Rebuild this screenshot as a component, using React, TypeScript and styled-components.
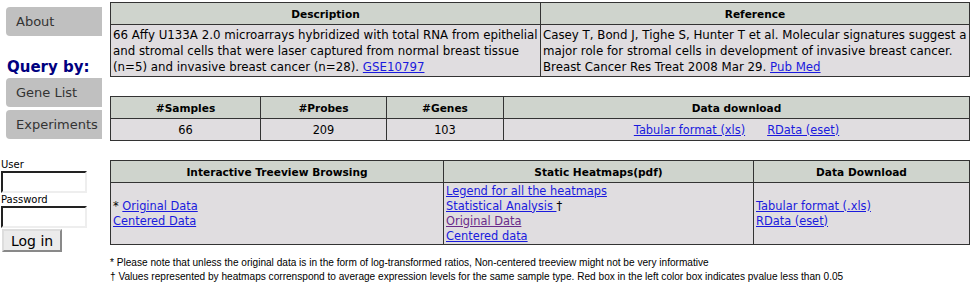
import * as React from 'react';
import styled, { createGlobalStyle } from 'styled-components';

const GlobalStyle = createGlobalStyle`
  html, body {
    margin: 0;
    padding: 0;
    background: #ffffff;
    font-family: "DejaVu Sans", Verdana, sans-serif;
  }
  a {
    color: #1a1add;
  }
`;

const Page = styled.div`
  display: flex;
  align-items: flex-start;
`;

const Sidebar = styled.div`
  width: 110px;
  flex: none;
  padding-top: 7px;
`;

const NavButton = styled.div`
  width: 86px;
  height: 29px;
  margin-left: 6px;
  margin-bottom: 3px;
  padding-left: 10px;
  display: flex;
  align-items: center;
  background: #c0c0c0;
  border-radius: 4px 0 0 4px;
  color: #333333;
  font-size: 13px;
`;

const QueryTitle = styled.div`
  margin: 22px 0 2px 7px;
  color: #000080;
  font-size: 15px;
  font-weight: bold;
  line-height: 18px;
`;

const LoginForm = styled.form`
  margin-top: 19px;
  padding-left: 1px;
  display: flex;
  flex-direction: column;
  align-items: flex-start;
`;

const FieldLabel = styled.label`
  font-size: 10px;
  line-height: 13px;
  color: #000;
`;

const Field = styled.input`
  box-sizing: border-box;
  width: 86px;
  height: 22px;
  border: 2px inset #eeeeee;
  border-top-color: #777;
  border-left-color: #777;
  margin: 0;
  padding: 1px 2px;
  background: #fff;
`;

const LoginButton = styled.button`
  margin: 1px 0 0 1px;
  height: 23px;
  padding: 0 7px;
  font-family: "DejaVu Sans", Verdana, sans-serif;
  font-size: 14px;
  background: #ebebeb;
  border: 2px outset #dddddd;
  color: #000;
`;

const Main = styled.div`
  width: 860px;
  padding-top: 2px;
  display: flex;
  flex-direction: column;
  gap: 19px;
`;

const Table = styled.table<{ $fs?: number }>`
  width: 100%;
  table-layout: fixed;
  border-collapse: collapse;
  border: 1px solid #333;
  font-size: ${(p) => p.$fs ?? 11.4}px;
  line-height: 16px;
`;

const Head = styled.th<{ $w?: number }>`
  box-sizing: border-box;
  background: #cfd4cd;
  border: 1px solid #333;
  height: 22px;
  padding: 0 2px;
  font-size: 10.6px;
  font-weight: bold;
  text-align: center;
  width: ${(p) => (p.$w ? `${p.$w}px` : 'auto')};
`;

const Cell = styled.td<{ $center?: boolean; $lh?: number; $h?: number }>`
  box-sizing: border-box;
  background: #e0dde0;
  border: 1px solid #333;
  padding: 0 2px;
  vertical-align: middle;
  height: ${(p) => (p.$h ? `${p.$h}px` : 'auto')};
  text-align: ${(p) => (p.$center ? 'center' : 'left')};
  line-height: ${(p) => (p.$lh ? `${p.$lh}px` : '16px')};
`;

const Gap = styled.span`
  display: inline-block;
  width: 22px;
`;

const Visited = styled.a`
  color: #6a2a8a;
`;

const Notes = styled.div`
  margin-top: -8px;
  font-family: "Liberation Sans Narrow", "Liberation Sans", Arial, sans-serif;
  font-size: 10.1px;
  line-height: 14px;
  color: #000;
`;

const nav = ['Gene List', 'Experiments'];

export default function App() {
  return (
    <>
      <GlobalStyle />
      <Page>
        <Sidebar>
          <NavButton>About</NavButton>
          <QueryTitle>Query by:</QueryTitle>
          {nav.map((n) => (
            <NavButton key={n}>{n}</NavButton>
          ))}
          <LoginForm onSubmit={(e) => e.preventDefault()}>
            <FieldLabel>User</FieldLabel>
            <Field type="text" />
            <FieldLabel>Password</FieldLabel>
            <Field type="password" />
            <LoginButton type="submit">Log in</LoginButton>
          </LoginForm>
        </Sidebar>
        <Main>
          <Table $fs={11.8}>
            <thead>
              <tr>
                <Head $w={430}>Description</Head>
                <Head>Reference</Head>
              </tr>
            </thead>
            <tbody>
              <tr>
                <Cell $h={52}>
                  66 Affy U133A 2.0 microarrays hybridized with total RNA from epithelial and
                  stromal cells that were laser captured from normal breast tissue (n=5) and
                  invasive breast cancer (n=28). <a href="#">GSE10797</a>
                </Cell>
                <Cell $h={52}>
                  Casey T, Bond J, Tighe S, Hunter T et al. Molecular signatures suggest a major
                  role for stromal cells in development of invasive breast cancer. Breast Cancer
                  Res Treat 2008 Mar 29. <a href="#">Pub Med</a>
                </Cell>
              </tr>
            </tbody>
          </Table>

          <Table>
            <thead>
              <tr>
                <Head $w={150}>#Samples</Head>
                <Head $w={126}>#Probes</Head>
                <Head $w={117}>#Genes</Head>
                <Head>Data download</Head>
              </tr>
            </thead>
            <tbody>
              <tr>
                <Cell $center $h={22}>66</Cell>
                <Cell $center $h={22}>209</Cell>
                <Cell $center $h={22}>103</Cell>
                <Cell $center $h={22}>
                  <a href="#">Tabular format (xls)</a>
                  <Gap />
                  <a href="#">RData (eset)</a>
                </Cell>
              </tr>
            </tbody>
          </Table>

          <Table>
            <thead>
              <tr>
                <Head $w={333}>Interactive Treeview Browsing</Head>
                <Head $w={310}>Static Heatmaps(pdf)</Head>
                <Head>Data Download</Head>
              </tr>
            </thead>
            <tbody>
              <tr>
                <Cell $lh={15} $h={62}>
                  * <a href="#">Original Data</a>
                  <br />
                  <a href="#">Centered Data</a>
                </Cell>
                <Cell $lh={15} $h={62}>
                  <a href="#">Legend for all the heatmaps</a>
                  <br />
                  <a href="#">Statistical Analysis </a>†
                  <br />
                  <Visited href="#">Original Data</Visited>
                  <br />
                  <a href="#">Centered data</a>
                </Cell>
                <Cell $lh={15} $h={62}>
                  <a href="#">Tabular format (.xls)</a>
                  <br />
                  <a href="#">RData (eset)</a>
                </Cell>
              </tr>
            </tbody>
          </Table>

          <Notes>
            * Please note that unless the original data is in the form of log-transformed ratios,
            Non-centered treeview might not be very informative
            <br />† Values represented by heatmaps correnspond to average expression levels for the
            same sample type. Red box in the left color box indicates pvalue less than 0.05
          </Notes>
        </Main>
      </Page>
    </>
  );
}
